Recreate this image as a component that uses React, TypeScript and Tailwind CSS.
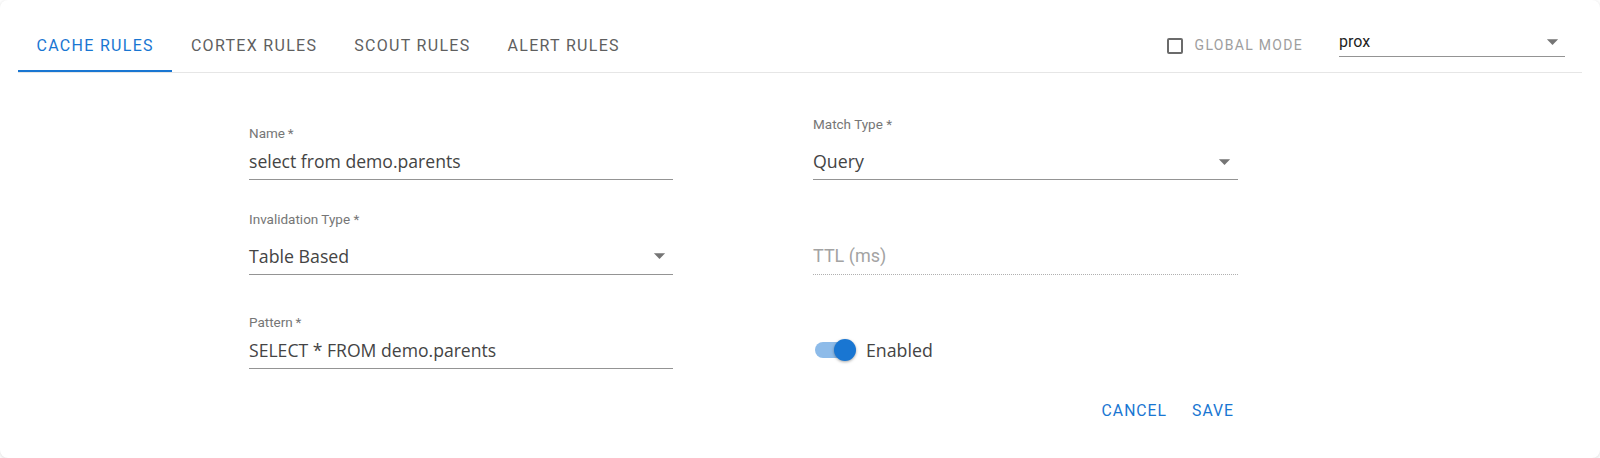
import React from 'react';

const tabs = ['Cache Rules', 'Cortex Rules', 'Scout Rules', 'Alert Rules'];

function ArrowDrop({ className }: { className?: string }) {
  return (
    <svg viewBox="0 0 24 24" className={className} fill="currentColor">
      <path d="M7 10l5 5 5-5z" />
    </svg>
  );
}

function TextField({ label, value }: { label: string; value: string }) {
  return (
    <div className="h-[63px] flex flex-col justify-end border-b border-[#949494]">
      <div className="mb-2 text-[13.5px] leading-4 text-[#767676] font-['Roboto',sans-serif]">{label}</div>
      <div className="mb-[6px] h-6 leading-6 text-[17.6px] text-[#444] font-['Open_Sans',sans-serif] whitespace-nowrap">
        {value}
      </div>
    </div>
  );
}

function SelectField({ label, value }: { label: string; value: string }) {
  return (
    <div className="h-[63px] flex flex-col justify-end border-b border-[#949494]">
      <div className="mb-[17px] text-[13.5px] leading-4 text-[#767676] font-['Roboto',sans-serif]">{label}</div>
      <div className="mb-[6px] h-6 flex items-center justify-between">
        <span className="leading-6 text-[17.75px] text-[#444] font-['Open_Sans',sans-serif]">{value}</span>
        <ArrowDrop className="w-[27px] h-[27px] shrink-0 text-[#757575]" />
      </div>
    </div>
  );
}

export default function App() {
  return (
    <div className="h-[458px] bg-white rounded-lg shadow-[0_1px_4px_rgba(0,0,0,0.15)] overflow-hidden font-['Roboto',sans-serif]">
      {/* Tabs header */}
      <div className="mx-[18px] mt-[17px] h-[55px] box-content flex border-b border-[#e6e6e6]">
        {tabs.map((t, i) => (
          <div
            key={t}
            className={
              'relative h-full flex items-center pt-[2px] px-[18.5px] text-[16px] tracking-[1.3px] uppercase ' +
              (i === 0 ? 'text-[#1976d2]' : 'text-[#5f5f5f]')
            }
          >
            {t}
            {i === 0 && <div className="absolute left-0 right-0 bottom-0 h-[2px] bg-[#1976d2]" />}
          </div>
        ))}

        <div className="ml-auto flex items-center pt-[2px] pr-[17px]">
          <div className="w-4 h-4 border-2 border-[#6b6b6b] rounded-[2px]" />
          <span className="ml-3 text-[14px] tracking-[1.3px] text-[#9e9e9e] uppercase">Global Mode</span>
          <div className="ml-[36px] -mt-[7px] w-[226px] h-[29px] flex items-center justify-between border-b border-[#949494]">
            <span className="text-[16px] text-[#1f1f1f]">prox</span>
            <ArrowDrop className="w-[27px] h-[27px] -mr-[0.5px] text-[#757575]" />
          </div>
        </div>
      </div>

      {/* Form */}
      <div className="pl-[249px] pt-[44px]">
        <div className="grid grid-cols-[424px_425px] gap-x-[140px] gap-y-[31.5px]">
          <TextField label={'Name\u2009*'} value="select from demo.parents" />
          <SelectField label="Match Type *" value="Query" />
          <SelectField label="Invalidation Type *" value="Table Based" />
          <div className="h-[63px] flex flex-col justify-end border-b border-dotted border-[#b0b0b0]">
            <div className="mb-[6px] h-6 leading-6 text-[18px] text-[#a3a3a3]">TTL (ms)</div>
          </div>
          <TextField label={'Pattern\u2009*'} value="SELECT * FROM demo.parents" />
          <div className="h-[63px] flex items-end">
            <div className="mb-[7px] ml-[2px] h-6 flex items-center">
              <div className="relative w-[41px] h-6">
                <div className="absolute left-0 top-[4px] w-[38px] h-4 rounded-full bg-[#8dbbe9]" />
                <div className="absolute right-0 top-[1px] w-[22px] h-[22px] rounded-full bg-[#1976d2] shadow-[0_1px_3px_rgba(0,0,0,0.35)]" />
              </div>
              <span className="ml-[10px] text-[17.75px] text-[#444] font-['Open_Sans',sans-serif]">Enabled</span>
            </div>
          </div>
        </div>

        <div className="w-[989px] mt-[24px] flex justify-end gap-[17px]">
          <button className="h-9 px-1 text-[15.75px] tracking-[1px] uppercase text-[#1976d2]">Cancel</button>
          <button className="h-9 px-1 text-[15.75px] tracking-[1px] uppercase text-[#1976d2]">Save</button>
        </div>
      </div>
    </div>
  );
}
